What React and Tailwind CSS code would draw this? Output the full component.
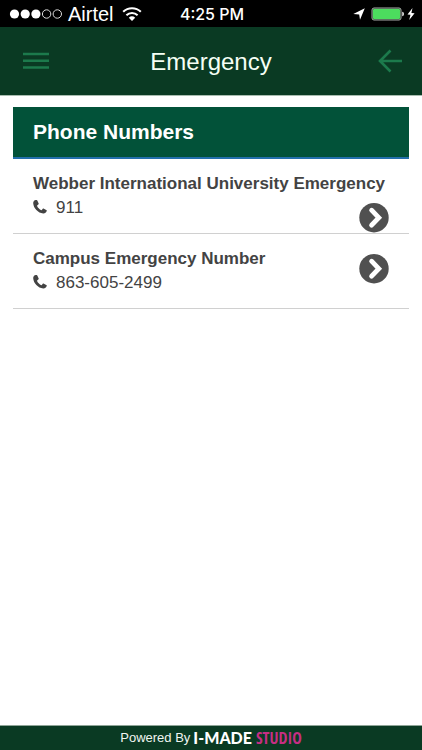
import React from "react";

const contacts = [
  { name: "Webber International University Emergency", number: "911", align: "items-end" },
  { name: "Campus Emergency Number", number: "863-605-2499", align: "items-start pt-5" },
];

function Signal() {
  return (
    <svg className="h-3 w-[53px]" viewBox="0 0 53 12" aria-hidden="true">
      <g fill="#fff">
        <circle cx="5.5" cy="6" r="4.6" />
        <circle cx="16.2" cy="6" r="4.6" />
        <circle cx="26.9" cy="6" r="4.6" />
      </g>
      <g fill="none" stroke="#ddd" strokeWidth="1">
        <circle cx="37.6" cy="6" r="4.2" />
        <circle cx="48.3" cy="6" r="4.2" />
      </g>
    </svg>
  );
}

function Wifi() {
  return (
    <svg className="h-4 w-5" viewBox="0 0 20 16" fill="none" stroke="#fff" aria-hidden="true">
      <path d="M1.2 5.8a12.6 12.6 0 0 1 17.6 0" strokeWidth="2.1" />
      <path d="M4.4 9.2a8 8 0 0 1 11.2 0" strokeWidth="2" />
      <path d="M10 15l-3.2-3.3a4.7 4.7 0 0 1 6.4 0z" fill="#fff" stroke="none" />
    </svg>
  );
}

function StatusBar() {
  return (
    <div className="grid h-[27px] grid-cols-[1fr_auto_1fr] items-center bg-black pl-[9px] pr-[7px] text-white">
      <div className="flex items-center">
        <Signal />
        <span className="ml-[6px] text-xl leading-6">Airtel</span>
        <span className="ml-2"><Wifi /></span>
      </div>
      <span className="font-[Inter,sans-serif] text-base font-medium leading-6">4:25 PM</span>
      <div className="flex items-center justify-end">
        <svg className="h-3 w-3" viewBox="0 0 12 12" fill="#fff" aria-hidden="true">
          <path d="M11.8.3L7 11.8 6.2 6.5.3 5.9z" />
        </svg>
        <svg className="ml-[6px] h-[14px] w-[34px]" viewBox="0 0 34 14" aria-hidden="true">
          <rect x="1" y="1" width="29" height="12" rx="2" fill="#103818" stroke="#a9aaa9" strokeWidth="1" />
          <rect x="2" y="2" width="27" height="10" rx="1" fill="#4cdc5e" />
          <path d="M31.2 4.7c2.4.5 2.4 4.1 0 4.6z" fill="#ddd" />
        </svg>
        <svg className="ml-[2px] h-3 w-2" viewBox="0 0 8 12" fill="#fff" aria-hidden="true">
          <path d="M5.5 0L.5 6.4l3 .3L2.2 12l5.4-6.8-3.2-.3z" />
        </svg>
      </div>
    </div>
  );
}

function ContactRow({ name, number, align }) {
  return (
    <li className="flex h-[75px] border-b border-[#d0d0d0] px-5">
      <div className="min-w-0 flex-1 whitespace-nowrap pt-[13px] text-[#434343]">
        <h3 className="text-[17px] font-bold leading-6">{name}</h3>
        <p className="flex items-center text-[17px] leading-6">
          <svg className="mb-[3px] mr-[9px] h-[14px] w-[14px] shrink-0" viewBox="0 0 14 14" fill="#434343" aria-hidden="true">
            <path d="M2.7 0C1.2.3.1 1.5.2 3.2c.3 5 4.900 9.800 10 10.200 1.700.1 3-.8 3.500-2.300.2-.6.1-.9-.5-1.200l-2.300-1.200c-.5-.3-.9-.2-1.300.3l-.8.9c-.3.3-.6.3-1 .1-1.600-1-2.800-2.200-3.600-3.800-.2-.4-.1-.7.2-.9l.8-.7c.5-.4.6-.7.4-1.300L4.400.7C4.100 0 3.500-.2 2.700 0z" />
          </svg>
          {number}
        </p>
      </div>
      <div className={"flex " + align}>
        <a href={"tel:" + number} aria-label={"Call " + name}>
          <svg className="block h-[30px] w-[30px]" viewBox="0 0 30 30" aria-hidden="true">
            <circle cx="15" cy="14.7" r="14.7" fill="#505050" />
            <path d="M12.600 7.200L19.800 14.700l-7.200 7.500" fill="none" stroke="#fff" strokeWidth="4.800" strokeLinecap="round" />
          </svg>
        </a>
      </div>
    </li>
  );
}

export default function App() {
  return (
    <div className="flex min-h-screen flex-col bg-white font-['Liberation_Sans',Arial,sans-serif]">
      <StatusBar />
      <header className="grid h-[69px] grid-cols-[1fr_auto_1fr] items-center border-b border-[#a9bdb0] bg-[#0a3a23] px-5">
        <button type="button" aria-label="Menu" className="justify-self-start">
          <svg className="block h-6 w-8" viewBox="0 0 32 24" stroke="#1c7a4c" strokeWidth="2.4" aria-hidden="true">
            <path d="M3 5h26M3 11.8h26M3 18.5h26" />
          </svg>
        </button>
        <h1 className="pt-px text-2xl text-[#f5fff5]">Emergency</h1>
        <button type="button" aria-label="Back" className="justify-self-end">
          <svg className="block h-6 w-6" viewBox="0 0 24 24" fill="none" stroke="#1c7a4c" strokeWidth="2.6" aria-hidden="true">
            <path d="M12.5 1.5L2 12l10.5 10.5M2 12h22" />
          </svg>
        </button>
      </header>
      <main className="flex-1 px-[13px] pt-[11px]">
        <h2 className="h-[52px] border-b-2 border-[#236fac] bg-[#025239] pl-5 text-[21px] font-bold leading-[50px] text-white">
          Phone Numbers
        </h2>
        <ul>
          {contacts.map((c) => (
            <ContactRow key={c.number} {...c} />
          ))}
        </ul>
      </main>
      <footer className="flex h-[25px] items-center justify-center border-t border-[#8fa598] bg-[#0a3a23] text-[#f0f5f1]">
        <span className="text-[13px]">Powered By</span>
        <span className="ml-[3px] flex items-center gap-1">
          <span className="font-[Lato,sans-serif] text-base font-black leading-6 text-white">I-MADE</span>
          <span className="font-['Liberation_Sans_Narrow','Open_Sans_Condensed',sans-serif] text-base font-bold leading-6 text-[#c62e83]">STUDIO</span>
        </span>
      </footer>
    </div>
  );
}
